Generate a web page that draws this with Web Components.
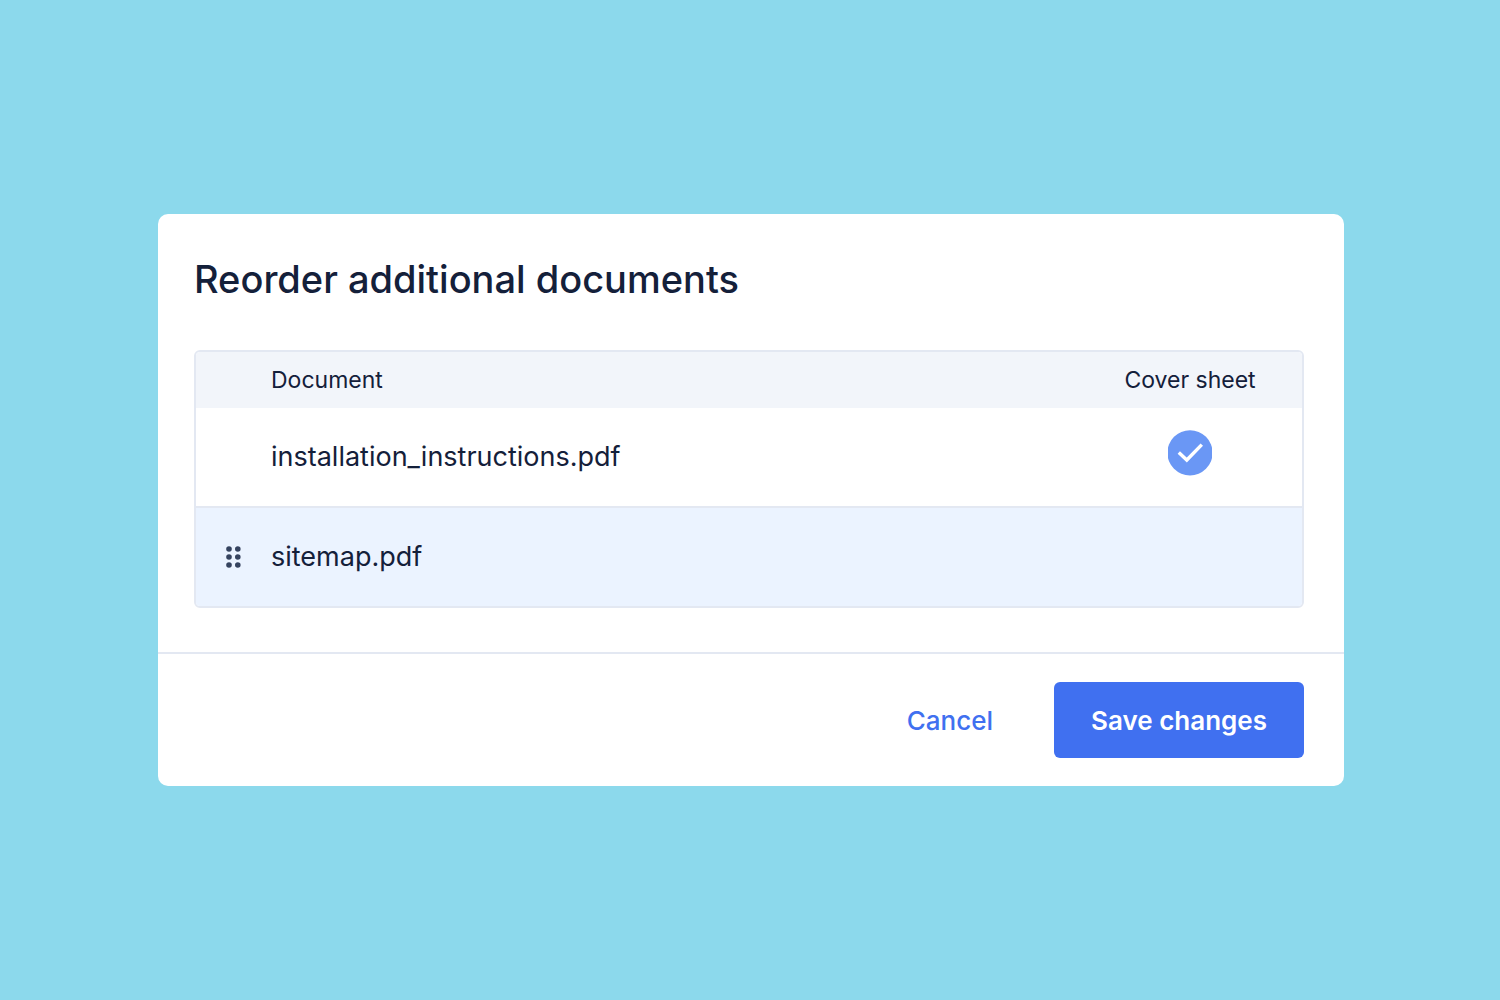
<!DOCTYPE html>
<html lang="en">
<head>
<meta charset="utf-8">
<meta name="viewport" content="width=device-width, initial-scale=1">
<title>Reorder additional documents</title>
<style>
  body {
    margin: 0;
    background: #8cd9ec;
    color: #14203a;
    font-family: Inter, "Liberation Sans", sans-serif;
    --line: #e3e8f2;
    --primary: #4070f0;
  }
</style>
</head>
<body>
<reorder-page>
  <modal-dialog>
    <span slot="title">Reorder additional documents</span>
    <document-table></document-table>
    <action-button slot="actions" variant="link">Cancel</action-button>
    <action-button slot="actions" variant="primary">Save changes</action-button>
  </modal-dialog>
</reorder-page>

<script>
  class BaseElement extends HTMLElement {
    constructor() {
      super();
      this.attachShadow({ mode: "open" }).innerHTML = this.constructor.markup;
    }
  }

  customElements.define("reorder-page", class extends BaseElement {
    static markup = `
      <style>
        :host { display: block; }
        main {
          box-sizing: border-box;
          min-height: 100vh;
          padding: 24px 156px 24px 158px;
          display: flex;
          flex-direction: column;
          justify-content: center;
        }
        @media (max-width: 1000px) { main { padding: 24px; } }
      </style>
      <main><slot></slot></main>`;
  });

  customElements.define("modal-dialog", class extends BaseElement {
    static markup = `
      <style>
        :host { display: block; }
        section { background: #fff; border-radius: 10px; }
        .body { padding: 40px 40px 44px 36px; }
        h1 {
          margin: 0 0 46px;
          font-size: 38px;
          line-height: 50px;
          font-weight: 500;
        }
        footer {
          display: flex;
          flex-wrap: wrap;
          justify-content: flex-end;
          gap: 24px;
          padding: 28px 40px 28px 36px;
          border-top: 2px solid var(--line);
        }
      </style>
      <section role="dialog" aria-labelledby="title">
        <div class="body">
          <h1 id="title"><slot name="title"></slot></h1>
          <slot></slot>
        </div>
        <footer><slot name="actions"></slot></footer>
      </section>`;
  });

  customElements.define("check-badge", class extends BaseElement {
    static markup = `
      <style>
        :host { display: block; }
        svg { display: block; width: 44px; height: 46px; margin: 0 auto; }
      </style>
      <svg viewBox="0 0 44 46" role="img" aria-label="Yes">
        <circle cx="22" cy="22.8" r="22.6" fill="#6a97f5"/>
        <path d="M10.8 22.5 L18.8 30 L33.8 14.6" fill="none" stroke="#fff" stroke-width="3.4"/>
      </svg>`;
  });

  customElements.define("drag-handle", class extends BaseElement {
    static markup = `
      <style>
        :host { display: block; }
        button {
          display: block;
          padding: 0;
          border: 0;
          background: none;
          color: #35435f;
          cursor: grab;
        }
        svg { display: block; width: 16px; height: 24px; }
      </style>
      <button type="button" aria-label="Drag to reorder">
        <svg viewBox="0 0 16 24" fill="currentColor" aria-hidden="true">
          <circle cx="3" cy="4" r="2.8"/>
          <circle cx="11.8" cy="4" r="2.8"/>
          <circle cx="3" cy="12" r="2.8"/>
          <circle cx="11.8" cy="12" r="2.8"/>
          <circle cx="3" cy="20" r="2.8"/>
          <circle cx="11.8" cy="20" r="2.8"/>
        </svg>
      </button>`;
  });

  customElements.define("document-table", class extends BaseElement {
    static markup = `
      <style>
        :host {
          display: block;
          border: 2px solid var(--line);
          border-radius: 6px;
          overflow: hidden;
        }
        table { width: 100%; table-layout: fixed; border-spacing: 0; }
        .grip { width: 75px; }
        .cover { width: 224px; }
        th, td { padding: 0; text-align: left; }
        th {
          height: 56px;
          background: #f2f5fa;
          font-size: 23px;
          line-height: 28px;
          font-weight: 400;
        }
        td { height: 98px; font-size: 27px; line-height: 36px; }
        tr + tr td { border-top: 2px solid var(--line); background: #ebf3ff; }
        drag-handle { margin-left: 30px; }
        th:last-child { text-align: center; }
        td:last-child { vertical-align: top; }
        check-badge { margin-top: 22px; }
      </style>
      <table>
        <colgroup><col class="grip"><col><col class="cover"></colgroup>
        <thead>
          <tr><th></th><th scope="col">Document</th><th scope="col">Cover sheet</th></tr>
        </thead>
        <tbody>
          <tr><td></td><td>installation_instructions.pdf</td><td><check-badge></check-badge></td></tr>
          <tr><td><drag-handle></drag-handle></td><td>sitemap.pdf</td><td></td></tr>
        </tbody>
      </table>`;
  });

  customElements.define("action-button", class extends BaseElement {
    static markup = `
      <style>
        :host { display: block; }
        button {
          display: block;
          height: 76px;
          padding: 2px 37px 0;
          border: 0;
          border-radius: 6px;
          background: none;
          color: var(--primary);
          font: 500 26px/36px Inter, "Liberation Sans", sans-serif;
          cursor: pointer;
        }
        :host([variant="primary"]) button {
          background: var(--primary);
          color: #fff;
          font-weight: 600;
        }
      </style>
      <button type="button"><slot></slot></button>`;
  });
</script>
</body>
</html>
